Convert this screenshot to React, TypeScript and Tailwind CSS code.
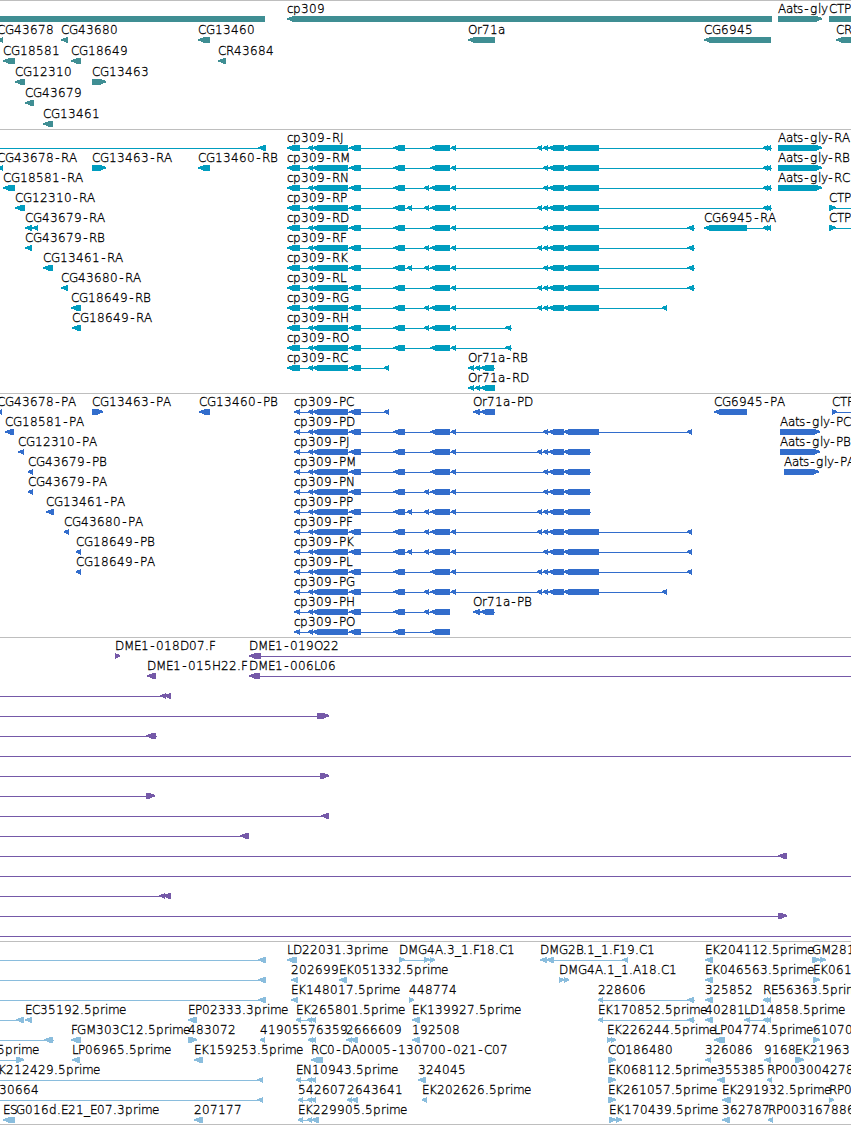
import React from 'react';

type Kind = 'l' | 'r' | 'box' | 'line';
type Part = [number, number, Kind?];

interface Feature {
  row: number;
  label?: string;
  // label start, when it differs from the first part
  x?: number;
  parts: Part[];
}

interface TrackProps {
  name: string;
  className: string;
  height: number;
  pitch?: number;
  features: Feature[];
}

const WIDTH = 851;

// Glyph advances in whole pixels
const ADVANCE: Record<string, number> = {
  A: 8, B: 7, C: 8, D: 9, E: 7, F: 6, G: 9, H: 9, J: 4, K: 8, L: 6, M: 10, N: 9, O: 9, P: 7, R: 8, S: 6, T: 7,
  a: 7, c: 6, d: 8, e: 7, g: 8, i: 3, l: 3, m: 11, p: 8, r: 5, s: 6, t: 4, y: 6,
  '-': 7, '.': 4, _: 6,
};

const charPositions = (text: string, start: number) => {
  let x = start;
  return text
    .split('')
    .map((ch) => {
      const at = x;
      x += ADVANCE[ch] ?? 8;
      // the hyphen glyph is narrow, so center it in its cell
      return ch === '-' ? at + 1.3 : at;
    })
    .join(' ');
};

const partPath = ([a, b, kind = 'l']: Part, y: number) => {
  const tip = Math.min(6, b - a);
  if (kind === 'line') return `M${a} ${y + 3}H${b}v1H${a}z`;
  if (kind === 'box') return `M${a} ${y}H${b}v6H${a}z`;
  if (kind === 'r') return `M${a} ${y}H${b - tip}L${b} ${y + 2}v1.4L${b - tip} ${y + 6}H${a}z`;
  return `M${b} ${y}H${a + tip}L${a} ${y + 2}v1.4L${a + tip} ${y + 6}H${b}z`;
};

const Track: React.FC<TrackProps> = ({ name, className, height, pitch = 20, features }) => (
  <section aria-label={name} className={`w-full border-t border-[#bebebe] overflow-hidden ${className}`}>
    <svg className="block" width={WIDTH} height={height - 1} viewBox={`0 1 ${WIDTH} ${height - 1}`}>
      {features.map((f, i) => (
        <g key={i}>
          {f.parts.map((p, j) => (
            <path key={j} d={partPath(p, 16 + f.row * pitch)} fill="currentColor" shapeRendering="crispEdges" />
          ))}
          {f.label && (
            <text
              x={charPositions(f.label, f.x ?? f.parts[0][0])}
              y={13 + f.row * pitch}
              className="fill-black stroke-black stroke-[0.3px] font-['DejaVu_Sans',sans-serif] text-[12px] font-extralight"
            >
              {f.label}
            </text>
          )}
        </g>
      ))}
    </svg>
  </section>
);

const genes: Feature[] = [
  { row: 0, parts: [[0, 265, 'box']] },
  { row: 0, label: 'cp309', parts: [[287, 772]] },
  { row: 0, label: 'Aats-gly', parts: [[778, 822, 'r']] },
  { row: 0, label: 'CTP', parts: [[829, 860, 'box']] },
  { row: 1, label: 'CG43678', parts: [[-3, 3]] },
  { row: 1, label: 'CG43680', parts: [[61, 68]] },
  { row: 1, label: 'CG13460', parts: [[198, 210]] },
  { row: 1, label: 'Or71a', parts: [[468, 495]] },
  { row: 1, label: 'CG6945', parts: [[704, 771]] },
  { row: 1, label: 'CR', parts: [[836, 870]] },
  { row: 2, label: 'CG18581', parts: [[3, 15]] },
  { row: 2, label: 'CG18649', parts: [[71, 81]] },
  { row: 2, label: 'CR43684', parts: [[218, 226]] },
  { row: 3, label: 'CG12310', parts: [[15, 25]] },
  { row: 3, label: 'CG13463', parts: [[92, 106, 'r']] },
  { row: 4, label: 'CG43679', parts: [[25, 34]] },
  { row: 5, label: 'CG13461', parts: [[43, 53]] },
];

// cp309 exons: D, E and G are the alternatively spliced ones
const D: Part = [407, 412];
const E: Part = [424, 429];
const G: Part = [537, 542];
const head: Part[] = [[308, 313], [312, 348], [349, 361]];
const mid: Part[] = [...head, [393, 405], [430, 450]];
const far: Part[] = [...mid, [451, 456], [543, 548], [548, 564]];
const full: Part[] = [...far, [563, 599]];
const tail: Part[] = [[763, 768], [766, 771]];

const model = (row: number, label: string, first: Part, end: number, ...groups: Part[][]): Feature => ({
  row,
  label,
  parts: [first, [first[1], end, 'line'], ...groups.flat()],
});

const RNA: Part = [287, 300];
const CDS: Part = [294, 300];

const transcripts: Feature[] = [
  { row: 0, parts: [[0, 260, 'line'], [258, 266]] },
  { row: 1, label: 'CG43678-RA', parts: [[-3, 3]] },
  { row: 1, label: 'CG13463-RA', parts: [[92, 106, 'r']] },
  { row: 1, label: 'CG13460-RB', parts: [[198, 210]] },
  { row: 2, label: 'CG18581-RA', parts: [[3, 15]] },
  { row: 3, label: 'CG12310-RA', parts: [[15, 25]] },
  { row: 4, label: 'CG43679-RA', parts: [[25, 32], [32, 38]] },
  { row: 5, label: 'CG43679-RB', parts: [[25, 32]] },
  { row: 6, label: 'CG13461-RA', parts: [[43, 53]] },
  { row: 7, label: 'CG43680-RA', parts: [[61, 68]] },
  { row: 8, label: 'CG18649-RB', parts: [[71, 81]] },
  { row: 9, label: 'CG18649-RA', parts: [[72, 81]] },
  model(0, 'cp309-RJ', RNA, 772, full, [G], tail),
  model(1, 'cp309-RM', RNA, 772, full, tail),
  model(2, 'cp309-RN', RNA, 772, full, [E], tail),
  model(3, 'cp309-RP', RNA, 772, full, [D, E, G], tail),
  model(4, 'cp309-RD', RNA, 695, full, [[687, 694]]),
  model(5, 'cp309-RF', RNA, 695, full, [E, G, [687, 694]]),
  model(6, 'cp309-RK', RNA, 695, full, [D, E, [687, 694]]),
  model(7, 'cp309-RL', RNA, 695, full, [G, [687, 694]]),
  model(8, 'cp309-RG', RNA, 667, full, [E, G, [662, 667]]),
  model(9, 'cp309-RH', RNA, 512, mid, [E, [451, 456], [505, 511]]),
  model(10, 'cp309-RO', RNA, 512, mid, [[451, 456], [505, 511]]),
  model(11, 'cp309-RC', RNA, 389, head, [[384, 389]]),
  { row: 11, label: 'Or71a-RB', parts: [[468, 474], [475, 480], [480, 494], [473, 495, 'line']] },
  { row: 12, label: 'Or71a-RD', parts: [[468, 474], [475, 480], [480, 495], [473, 495, 'line']] },
  { row: 4, label: 'CG6945-RA', parts: [[704, 747], [747, 771, 'line'], ...tail] },
  { row: 0, label: 'Aats-gly-RA', parts: [[778, 822, 'r']] },
  { row: 1, label: 'Aats-gly-RB', parts: [[778, 822, 'r']] },
  { row: 2, label: 'Aats-gly-RC', parts: [[778, 822, 'r']] },
  { row: 3, label: 'CTP', parts: [[829, 836, 'r'], [829, 851, 'line']] },
  { row: 4, label: 'CTP', parts: [[829, 836, 'r'], [829, 851, 'line']] },
];

const proteins: Feature[] = [
  { row: 0, label: 'CG43678-PA', parts: [[-3, 2]] },
  { row: 0, label: 'CG13463-PA', parts: [[92, 103, 'r']] },
  { row: 0, label: 'CG13460-PB', parts: [[199, 210]] },
  { row: 1, label: 'CG18581-PA', parts: [[5, 14]] },
  { row: 2, label: 'CG12310-PA', parts: [[18, 24]] },
  { row: 3, label: 'CG43679-PB', parts: [[28, 33]] },
  { row: 4, label: 'CG43679-PA', parts: [[28, 33]] },
  { row: 5, label: 'CG13461-PA', parts: [[46, 54]] },
  { row: 6, label: 'CG43680-PA', parts: [[64, 69]] },
  { row: 7, label: 'CG18649-PB', parts: [[76, 81]] },
  { row: 8, label: 'CG18649-PA', parts: [[76, 81]] },
  model(0, 'cp309-PC', CDS, 389, head, [[384, 389]]),
  model(1, 'cp309-PD', CDS, 692, full, [[687, 692]]),
  model(2, 'cp309-PJ', CDS, 591, far, [G, [563, 590]]),
  model(3, 'cp309-PM', CDS, 591, far, [[563, 590]]),
  model(4, 'cp309-PN', CDS, 591, far, [E, [563, 590]]),
  model(5, 'cp309-PP', CDS, 591, far, [D, E, G, [563, 590]]),
  model(6, 'cp309-PF', CDS, 692, full, [E, G, [687, 692]]),
  model(7, 'cp309-PK', CDS, 692, full, [D, E, [687, 692]]),
  model(8, 'cp309-PL', CDS, 692, full, [G, [687, 692]]),
  model(9, 'cp309-PG', CDS, 667, full, [E, G, [662, 667]]),
  model(10, 'cp309-PH', CDS, 450, mid, [E]),
  model(11, 'cp309-PO', CDS, 450, mid),
  { row: 0, label: 'Or71a-PD', parts: [[473, 480], [480, 495]] },
  { row: 10, label: 'Or71a-PB', parts: [[473, 480], [480, 494], [479, 495, 'line']] },
  { row: 0, label: 'CG6945-PA', parts: [[714, 747]] },
  { row: 0, label: 'CTP', parts: [[832, 837, 'r'], [832, 851, 'line']] },
  { row: 1, label: 'Aats-gly-PC', parts: [[780, 820, 'r']] },
  { row: 2, label: 'Aats-gly-PB', parts: [[780, 820, 'r']] },
  { row: 3, label: 'Aats-gly-PA', parts: [[784, 819, 'r']] },
];

const clones: Feature[] = [
  { row: 0, label: 'DME1-018D07.F', parts: [[115, 120, 'r']] },
  { row: 0, label: 'DME1-019O22', parts: [[249, 261], [260, 851, 'line']] },
  { row: 1, label: 'DME1-015H22.F', parts: [[147, 156]] },
  { row: 1, label: 'DME1-006L06', parts: [[249, 260], [260, 851, 'line']] },
  { row: 2, parts: [[0, 162, 'line'], [160, 166], [164, 171]] },
  { row: 3, parts: [[0, 318, 'line'], [317, 329, 'r']] },
  { row: 4, parts: [[0, 157, 'line'], [146, 156]] },
  { row: 5, parts: [[0, 851, 'line']] },
  { row: 6, parts: [[0, 320, 'line'], [320, 329, 'r']] },
  { row: 7, parts: [[0, 147, 'line'], [146, 155, 'r']] },
  { row: 8, parts: [[0, 323, 'line'], [321, 329]] },
  { row: 9, parts: [[0, 242, 'line'], [240, 249]] },
  { row: 10, parts: [[0, 780, 'line'], [778, 787]] },
  { row: 11, parts: [[0, 851, 'line']] },
  { row: 12, parts: [[0, 161, 'line'], [159, 165], [163, 171]] },
  { row: 13, parts: [[0, 779, 'line'], [778, 787, 'r']] },
  { row: 14, parts: [[0, 851, 'line']] },
];

const ests: Feature[] = [
  { row: 0, parts: [[0, 260, 'line'], [258, 266]] },
  { row: 0, label: 'LD22031.3prime', parts: [[287, 297]] },
  { row: 0, label: 'DMG4A.3_1.F18.C1', parts: [[399, 405, 'r'], [399, 435, 'line'], [424, 430, 'r'], [430, 435, 'r']] },
  { row: 0, label: 'DMG2B.1_1.F19.C1', parts: [[540, 547], [546, 554], [550, 624, 'line'], [622, 628]] },
  { row: 0, label: 'EK204112.5prime', parts: [[705, 713]] },
  { row: 0, label: 'GM281', parts: [[812, 820, 'r'], [820, 826, 'r']] },
  { row: 1, parts: [[0, 260, 'line'], [258, 266]] },
  { row: 1, label: '202699', parts: [[291, 298]] },
  { row: 1, label: 'EK051332.5prime', parts: [[339, 347]] },
  { row: 1, label: 'DMG4A.1_1.A18.C1', parts: [[559, 564, 'r'], [564, 569, 'r']] },
  { row: 1, label: 'EK046563.5prime', parts: [[705, 713]] },
  { row: 1, label: 'EK061', parts: [[813, 820, 'r']] },
  { row: 2, parts: [[0, 260, 'line'], [258, 266]] },
  { row: 2, label: 'EK148017.5prime', parts: [[291, 298]] },
  { row: 2, label: '448774', parts: [[409, 414, 'r']] },
  { row: 2, label: '228606', parts: [[598, 603], [600, 695, 'line'], [687, 694]] },
  { row: 2, label: '325852', parts: [[705, 713]] },
  { row: 2, label: 'RE56363.5prime', parts: tail },
  { row: 3, parts: [[0, 18, 'line'], [16, 24]] },
  { row: 3, label: 'EC35192.5prime', parts: [[25, 32]] },
  { row: 3, label: 'EP02333.3prime', parts: [[188, 197]] },
  { row: 3, label: 'EK265801.5prime', parts: [[296, 301], [298, 314, 'line'], [307, 312], [311, 316]] },
  { row: 3, label: 'EK139927.5prime', parts: [[412, 420]] },
  { row: 3, label: 'EK170852.5prime', parts: [[598, 603], [600, 695, 'line'], [687, 694]] },
  { row: 3, label: '40281', parts: [[705, 713]] },
  { row: 3, label: 'LD14858.5prime', parts: [[744, 750], [746, 768, 'line'], ...tail] },
  { row: 4, parts: [[0, 54, 'line'], [44, 53]] },
  { row: 4, label: 'FGM303C12.5prime', parts: [[71, 81]] },
  { row: 4, label: '483072', parts: [[188, 197, 'r']] },
  { row: 4, label: '419055', parts: [[260, 265]] },
  { row: 4, label: '76359', parts: [[308, 313], [311, 316]] },
  { row: 4, label: '2666609', parts: [[346, 352], [350, 358]] },
  { row: 4, label: '192508', parts: [[412, 420]] },
  { row: 4, label: 'EK226244.5prime', parts: [[607, 612, 'r'], [611, 616, 'r']] },
  { row: 4, label: 'LP04774.5prime', parts: [[714, 725]] },
  { row: 4, label: '61070', parts: [[813, 820, 'r']] },
  { row: 5, label: '5prime', x: -3, parts: [[0, 17, 'line'], [16, 24, 'r']] },
  { row: 5, label: 'LP06965.5prime', parts: [[72, 80]] },
  { row: 5, label: 'EK159253.5prime', parts: [[194, 203]] },
  { row: 5, label: 'RC0-DA0005-130700-021-C07', parts: [[311, 323]] },
  { row: 5, label: 'CO186480', parts: [[608, 616, 'r']] },
  { row: 5, label: '326086', parts: [[705, 711]] },
  { row: 5, label: '9168', parts: [[764, 771]] },
  { row: 5, label: 'EK21963', parts: [[795, 804, 'r']] },
  { row: 6, label: 'EK212429.5prime', x: -9, parts: [[0, 259, 'line'], [257, 263]] },
  { row: 6, label: 'EN10943.5prime', parts: [[296, 301], [298, 314, 'line'], [307, 312], [311, 316]] },
  { row: 6, label: '324045', parts: [[418, 426]] },
  { row: 6, label: 'EK068112.5prime', parts: [[608, 616, 'r']] },
  { row: 6, label: '355385', parts: [[717, 725]] },
  { row: 6, label: 'RP003004278', parts: [[767, 772]] },
  { row: 7, label: '30664', x: -1, parts: [[0, 259, 'line'], [257, 263]] },
  { row: 7, label: '542607', parts: [[298, 303], [300, 314, 'line'], [307, 312], [311, 316]] },
  { row: 7, label: '2643641', parts: [[347, 352], [351, 358]] },
  { row: 7, label: 'EK202626.5prime', parts: [[422, 427]] },
  { row: 7, label: 'EK261057.5prime', parts: [[608, 616, 'r']] },
  { row: 7, label: 'EK291932.5prime', parts: [[722, 731]] },
  { row: 7, label: 'RP0', parts: [[829, 834, 'r']] },
  { row: 8, label: 'ESG016d.E21_E07.3prime', parts: [[3, 15]] },
  { row: 8, label: '207177', parts: [[194, 203]] },
  { row: 8, label: 'EK229905.5prime', parts: [[298, 303], [300, 314, 'line'], [307, 312], [311, 319]] },
  { row: 8, label: 'EK170439.5prime', parts: [[609, 616, 'r'], [616, 622, 'r']] },
  { row: 8, label: '362787', parts: [[722, 730]] },
  { row: 8, label: 'RP003167886', parts: [[768, 773]] },
];

export default function App() {
  return (
    <main className="flex flex-col w-[851px] h-[1125px] overflow-hidden bg-white border-b border-[#bebebe]">
      <Track name="Genes" className="h-[129px] text-[#3f8e93]" height={129} pitch={21} features={genes} />
      <Track name="Transcripts" className="h-[264px] text-[#009dbf]" height={264} features={transcripts} />
      <Track name="Proteins" className="h-[244px] text-[#326dcc]" height={244} features={proteins} />
      <Track name="Clones" className="h-[304px] text-[#7559a8]" height={304} features={clones} />
      <Track name="ESTs" className="h-[183px] text-[#8abddd]" height={183} features={ests} />
    </main>
  );
}
